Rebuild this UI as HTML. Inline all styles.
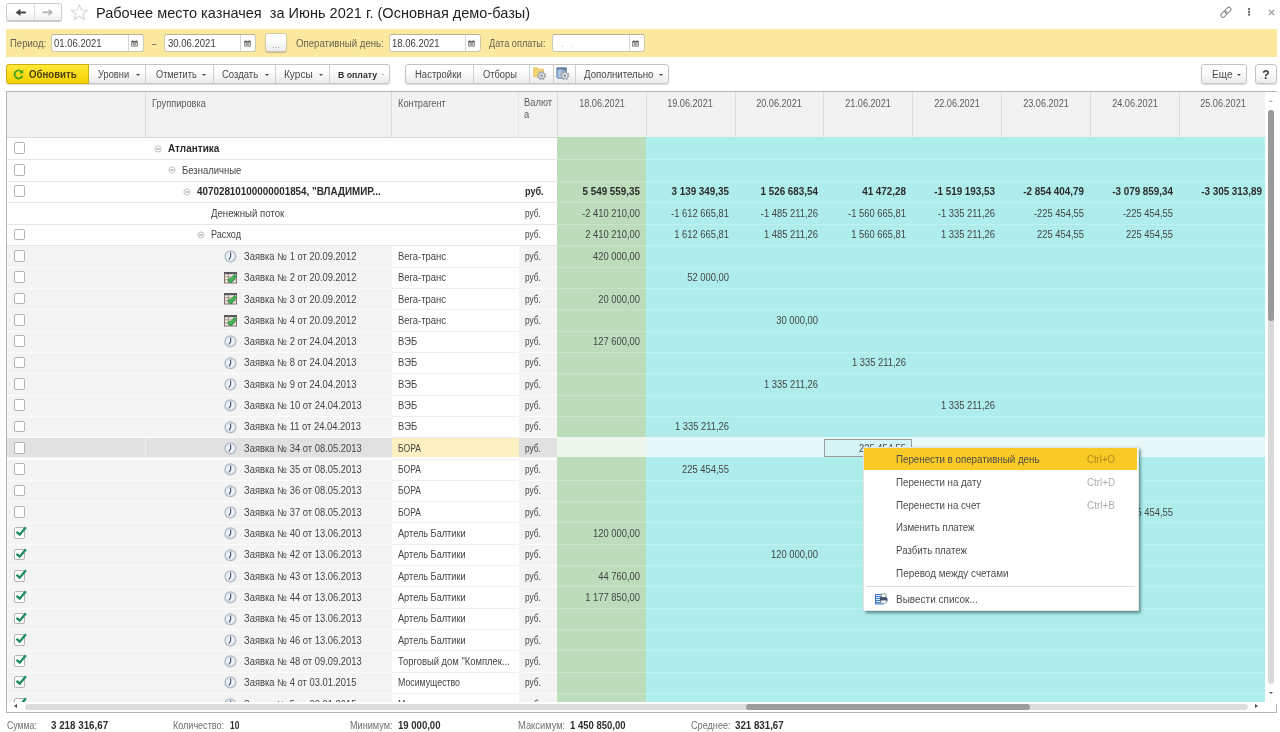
<!DOCTYPE html>
<html lang="ru"><head><meta charset="utf-8"><title>Рабочее место казначея</title>
<style>
*{box-sizing:border-box;margin:0;padding:0}
html,body{width:1280px;height:732px;overflow:hidden;background:#fff}
body{filter:blur(.3px);position:relative;font-family:"Liberation Sans",sans-serif;font-size:9.5px;color:#3f3f3f}
.a{position:absolute;white-space:nowrap}
</style></head>
<body>
<div class="a" style="left:6.4px;top:3.3px;width:56px;height:17.8px;border:1px solid #cacaca;border-radius:2.5px;background:linear-gradient(#fff 40%,#f0f0f0);box-shadow:0 1px 0.5px #c9c9c9"></div>
<div class="a" style="left:34px;top:4.3px;width:1px;height:16px;background:#dcdcdc"></div>
<svg class="a" style="left:15px;top:8px" width="12" height="9" viewBox="0 0 12 9"><path d="M0.6 4.4 L5.4 0.7 V3.4 H10.8 V5.4 H5.4 V8.1 Z" fill="#474747"/></svg>
<svg class="a" style="left:42px;top:8px" width="12" height="9" viewBox="0 0 12 9"><path d="M11.2 4.4 L6.6 0.7 V3.5 H0.4 V5.3 H6.6 V8.1 Z" fill="#b5b5b5"/></svg>
<svg class="a" style="left:70px;top:3.2px" width="19" height="18" viewBox="0 0 19 18"><path d="M9.3 1.6 L11.5 7 L17.4 7.3 L12.8 10.9 L14.4 16.5 L9.3 13.3 L4.2 16.5 L5.8 10.9 L1.2 7.3 L7.1 7 Z" fill="#fff" stroke="#d6d6d6" stroke-width="1.1" stroke-linejoin="round"/></svg>
<div class="a" style="left:96.3px;top:2.9px;font-size:15px;line-height:20px;color:#1f1f1f;white-space:pre;transform:scaleX(.969);transform-origin:0 50%">Рабочее место казначея  за Июнь 2021 г. (Основная демо-базы)</div>
<svg class="a" style="left:1219px;top:5px" width="14" height="14" viewBox="0 0 14 14"><g fill="none" stroke="#8d8d8d" stroke-width="1.1"><rect x="-3.4" y="-2.1" width="6.8" height="4.2" rx="2.1" transform="translate(4.9 9.3) rotate(-45)"/><rect x="-3.4" y="-2.1" width="6.8" height="4.2" rx="2.1" transform="translate(8.9 5.3) rotate(-45)"/></g></svg>
<div class="a" style="left:1247.5px;top:8.4px;width:2px;height:1.8px;background:#6a6a6a;box-shadow:0 2.8px 0 #6a6a6a,0 5.6px 0 #6a6a6a"></div>
<svg class="a" style="left:1268px;top:8.5px" width="7" height="7" viewBox="0 0 7 7"><path d="M0.8 0.8 L6.2 6.2 M6.2 0.8 L0.8 6.2" stroke="#8d8d8d" stroke-width="1.1"/></svg>
<div class="a" style="left:6px;top:29px;width:1271px;height:28px;background:#fbe9a0"></div>
<div class="a" style="left:9.8px;transform-origin:0 50%;top:36.70px;line-height:14px;font-size:10px;color:#686350;transform:scaleX(0.9561);">Период:</div>
<div class="a" style="left:51px;top:33.6px;width:92.5px;height:18.8px;background:#fff;border:1px solid #cfc9aa;border-top-color:#b9b396;border-radius:3px"></div>
<div class="a" style="left:127.5px;top:34.6px;width:1px;height:16.8px;background:#d4d4d4"></div>
<svg class="a" style="left:131.1px;top:39.6px" width="7" height="7" viewBox="0 0 7 7"><path d="M0.3 1 H1.2 V0.2 H2.4 V1 H4.6 V0.2 H5.8 V1 H6.7 V6.6 H0.3 Z" fill="#5e5e5e"/><rect x="1.1" y="2.6" width="4.8" height="3.2" fill="#ededed"/><rect x="1.9" y="3.3" width="3.2" height="1.9" fill="#8c8c8c"/></svg>
<div class="a" style="left:54.4px;transform-origin:0 50%;top:36.80px;line-height:14px;font-size:10px;color:#3c3c3c;transform:scaleX(0.9491);">01.06.2021</div>
<div class="a" style="left:152px;transform-origin:0 50%;top:36.70px;line-height:14px;font-size:10px;color:#686350;transform:scaleX(0.8271);">–</div>
<div class="a" style="left:164px;top:33.6px;width:92px;height:18.8px;background:#fff;border:1px solid #cfc9aa;border-top-color:#b9b396;border-radius:3px"></div>
<div class="a" style="left:240px;top:34.6px;width:1px;height:16.8px;background:#d4d4d4"></div>
<svg class="a" style="left:243.6px;top:39.6px" width="7" height="7" viewBox="0 0 7 7"><path d="M0.3 1 H1.2 V0.2 H2.4 V1 H4.6 V0.2 H5.8 V1 H6.7 V6.6 H0.3 Z" fill="#5e5e5e"/><rect x="1.1" y="2.6" width="4.8" height="3.2" fill="#ededed"/><rect x="1.9" y="3.3" width="3.2" height="1.9" fill="#8c8c8c"/></svg>
<div class="a" style="left:167.8px;transform-origin:0 50%;top:36.80px;line-height:14px;font-size:10px;color:#3c3c3c;transform:scaleX(0.9531);">30.06.2021</div>
<div class="a" style="left:265.3px;top:32.8px;width:22px;height:19px;border:1px solid #d0caa8;border-radius:3px;background:linear-gradient(#fff 35%,#ececec);box-shadow:0 1px 1px #c4b98a"></div>
<div class="a" style="left:126.19999999999999px;width:300px;text-align:center;transform-origin:50% 50%;top:37.50px;line-height:14px;font-size:9px;color:#9a9a9a;transform:scaleX(0.9380);">...</div>
<div class="a" style="left:295.5px;transform-origin:0 50%;top:36.70px;line-height:14px;font-size:10px;color:#686350;transform:scaleX(0.9635);">Оперативный день:</div>
<div class="a" style="left:388.5px;top:33.6px;width:92.0px;height:18.8px;background:#fff;border:1px solid #cfc9aa;border-top-color:#b9b396;border-radius:3px"></div>
<div class="a" style="left:464.5px;top:34.6px;width:1px;height:16.8px;background:#d4d4d4"></div>
<svg class="a" style="left:468.1px;top:39.6px" width="7" height="7" viewBox="0 0 7 7"><path d="M0.3 1 H1.2 V0.2 H2.4 V1 H4.6 V0.2 H5.8 V1 H6.7 V6.6 H0.3 Z" fill="#5e5e5e"/><rect x="1.1" y="2.6" width="4.8" height="3.2" fill="#ededed"/><rect x="1.9" y="3.3" width="3.2" height="1.9" fill="#8c8c8c"/></svg>
<div class="a" style="left:392.2px;transform-origin:0 50%;top:36.80px;line-height:14px;font-size:10px;color:#3c3c3c;transform:scaleX(0.9491);">18.06.2021</div>
<div class="a" style="left:488.7px;transform-origin:0 50%;top:36.70px;line-height:14px;font-size:10px;color:#686350;transform:scaleX(0.9168);">Дата оплаты:</div>
<div class="a" style="left:552px;top:33.6px;width:92.5px;height:18.8px;background:#fff;border:1px solid #cfc9aa;border-top-color:#b9b396;border-radius:3px"></div>
<div class="a" style="left:628.5px;top:34.6px;width:1px;height:16.8px;background:#d4d4d4"></div>
<svg class="a" style="left:632.1px;top:39.6px" width="7" height="7" viewBox="0 0 7 7"><path d="M0.3 1 H1.2 V0.2 H2.4 V1 H4.6 V0.2 H5.8 V1 H6.7 V6.6 H0.3 Z" fill="#5e5e5e"/><rect x="1.1" y="2.6" width="4.8" height="3.2" fill="#ededed"/><rect x="1.9" y="3.3" width="3.2" height="1.9" fill="#8c8c8c"/></svg>
<div class="a" style="left:561px;transform-origin:0 50%;top:36.80px;line-height:14px;font-size:10px;color:#c4c4c4;transform:scaleX(0.8638);">.&nbsp;&nbsp;&nbsp;.</div>
<div class="a" style="left:6px;top:64px;width:383.5px;height:19.5px;border:1px solid #c4c4c4;background:linear-gradient(#ffffff 30%,#ebebeb);box-shadow:0 1px 1px rgba(0,0,0,.13);border-radius:3px"></div>
<div class="a" style="left:6px;top:64px;width:83px;height:19.5px;border:1px solid #cdb010;border-radius:3px 0 0 3px;background:linear-gradient(#ffe838,#f5d000)"></div>
<svg class="a" style="left:12.5px;top:69px" width="11" height="11" viewBox="0 0 11 11"><path d="M8.6 2.9 A4 4 0 1 0 9.3 6.6" fill="none" stroke="#4aa51c" stroke-width="1.9"/><path d="M10.2 0.4 V4.4 H6.2 Z" fill="#4aa51c"/></svg>
<div class="a" style="left:28.9px;transform-origin:0 50%;top:67.80px;line-height:14px;font-size:10px;font-weight:bold;color:#4a4210;transform:scaleX(0.9627);">Обновить</div>
<div class="a" style="left:98.3px;transform-origin:0 50%;top:67.80px;line-height:14px;font-size:10px;color:#4a4a4a;transform:scaleX(0.9293);">Уровни</div>
<div class="a" style="left:136.0px;top:74.0px;width:0;height:0;border-left:2.2px solid transparent;border-right:2.2px solid transparent;border-top:2.2px solid #4a4a4a"></div>
<div class="a" style="left:145px;top:65px;width:1px;height:17.5px;background:#cfcfcf"></div>
<div class="a" style="left:155.5px;transform-origin:0 50%;top:67.80px;line-height:14px;font-size:10px;color:#4a4a4a;transform:scaleX(0.9162);">Отметить</div>
<div class="a" style="left:202.3px;top:74.0px;width:0;height:0;border-left:2.2px solid transparent;border-right:2.2px solid transparent;border-top:2.2px solid #4a4a4a"></div>
<div class="a" style="left:212.5px;top:65px;width:1px;height:17.5px;background:#cfcfcf"></div>
<div class="a" style="left:222.4px;transform-origin:0 50%;top:67.80px;line-height:14px;font-size:10px;color:#4a4a4a;transform:scaleX(0.9493);">Создать</div>
<div class="a" style="left:265.1px;top:74.0px;width:0;height:0;border-left:2.2px solid transparent;border-right:2.2px solid transparent;border-top:2.2px solid #4a4a4a"></div>
<div class="a" style="left:275px;top:65px;width:1px;height:17.5px;background:#cfcfcf"></div>
<div class="a" style="left:284.3px;transform-origin:0 50%;top:67.80px;line-height:14px;font-size:10px;color:#4a4a4a;transform:scaleX(1.0079);">Курсы</div>
<div class="a" style="left:319.2px;top:74.0px;width:0;height:0;border-left:2.2px solid transparent;border-right:2.2px solid transparent;border-top:2.2px solid #4a4a4a"></div>
<div class="a" style="left:329px;top:65px;width:1px;height:17.5px;background:#cfcfcf"></div>
<div class="a" style="left:337.5px;transform-origin:0 50%;top:67.80px;line-height:14px;font-size:9px;font-weight:bold;color:#333;transform:scaleX(0.9708);">В оплату</div>
<div class="a" style="left:381.59999999999997px;top:74.3px;width:0;height:0;border-left:1.6px solid transparent;border-right:1.6px solid transparent;border-top:1.6px solid #8a8a8a"></div>
<div class="a" style="left:405px;top:64px;width:264px;height:19.5px;border:1px solid #c4c4c4;background:linear-gradient(#ffffff 30%,#ebebeb);box-shadow:0 1px 1px rgba(0,0,0,.13);border-radius:3px"></div>
<div class="a" style="left:415.3px;transform-origin:0 50%;top:67.80px;line-height:14px;font-size:10px;color:#4a4a4a;transform:scaleX(0.9504);">Настройки</div>
<div class="a" style="left:472.5px;top:65px;width:1px;height:17.5px;background:#cfcfcf"></div>
<div class="a" style="left:483.1px;transform-origin:0 50%;top:67.80px;line-height:14px;font-size:10px;color:#4a4a4a;transform:scaleX(0.9314);">Отборы</div>
<div class="a" style="left:529px;top:65px;width:1px;height:17.5px;background:#cfcfcf"></div>
<div class="a" style="left:552.5px;top:65px;width:1px;height:17.5px;background:#cfcfcf"></div>
<div class="a" style="left:574.5px;top:65px;width:1px;height:17.5px;background:#cfcfcf"></div>
<div class="a" style="left:583.8px;transform-origin:0 50%;top:67.80px;line-height:14px;font-size:10px;color:#4a4a4a;transform:scaleX(0.9652);">Дополнительно</div>
<div class="a" style="left:659.1999999999999px;top:74.0px;width:0;height:0;border-left:2.2px solid transparent;border-right:2.2px solid transparent;border-top:2.2px solid #4a4a4a"></div>
<svg class="a" style="left:533px;top:66.5px" width="14" height="14" viewBox="0 0 14 14"><path d="M0.6 1.6 Q0.6 0.8 1.4 0.8 H4.2 L5.4 2.2 H10.6 V9.6 H0.6 Z" fill="#f2d675" stroke="#e3bd4e" stroke-width="0.8"/><circle cx="8.6" cy="8.6" r="3.9" fill="none" stroke="#a3abb3" stroke-width="1.5" stroke-dasharray="1.7 1.36"/><circle cx="8.6" cy="8.6" r="3" fill="#f6f7f8" stroke="#a3abb3" stroke-width="1.2"/><circle cx="8.6" cy="8.6" r="1.2" fill="#6c7488"/></svg>
<svg class="a" style="left:555.5px;top:66.5px" width="14" height="14" viewBox="0 0 14 14"><defs><linearGradient id="fl" x1="0" y1="0" x2="1" y2="0"><stop offset="0" stop-color="#7fa0cb"/><stop offset=".3" stop-color="#b5cbe6"/><stop offset="1" stop-color="#6f8db5"/></linearGradient></defs><path d="M0.8 0.8 H10.4 V11.4 H2 L0.8 10.2 Z" fill="url(#fl)" stroke="#6685b0" stroke-width="0.8"/><rect x="0.8" y="0.8" width="9.6" height="1.6" fill="#5f789f"/><circle cx="8.8" cy="8.6" r="3.9" fill="none" stroke="#a3abb3" stroke-width="1.5" stroke-dasharray="1.7 1.36"/><circle cx="8.8" cy="8.6" r="3" fill="#f6f7f8" stroke="#a3abb3" stroke-width="1.2"/><circle cx="8.8" cy="8.6" r="1.2" fill="#6c7488"/></svg>
<div class="a" style="left:1201px;top:64px;width:46px;height:19.5px;border:1px solid #c4c4c4;background:linear-gradient(#ffffff 30%,#ebebeb);box-shadow:0 1px 1px rgba(0,0,0,.13);border-radius:3px"></div>
<div class="a" style="left:1211.7px;transform-origin:0 50%;top:67.80px;line-height:14px;font-size:10px;color:#4a4a4a;transform:scaleX(1.0069);">Еще</div>
<div class="a" style="left:1237.3999999999999px;top:74.0px;width:0;height:0;border-left:2.2px solid transparent;border-right:2.2px solid transparent;border-top:2.2px solid #4a4a4a"></div>
<div class="a" style="left:1254.5px;top:64px;width:22.0px;height:19.5px;border:1px solid #c4c4c4;background:linear-gradient(#ffffff 30%,#ebebeb);box-shadow:0 1px 1px rgba(0,0,0,.13);border-radius:3px"></div>
<div class="a" style="left:1115.8px;width:300px;text-align:center;transform-origin:50% 50%;top:67.80px;line-height:14px;font-size:12px;font-weight:bold;color:#333;transform:scaleX(1.0000);">?</div>
<div class="a" style="left:6px;top:90.5px;width:1271px;height:622.5px;border:1px solid #b4b4b4;background:#fff"></div>
<div class="a" style="left:7px;top:91.5px;width:1258.5px;height:45.5px;background:#f2f2f2"></div>
<div class="a" style="left:7px;top:136.5px;width:1258.5px;height:1px;background:#d9d9d9"></div>
<div class="a" style="left:145px;top:92px;width:1px;height:45px;background:#dadada"></div>
<div class="a" style="left:391px;top:92px;width:1px;height:45px;background:#dadada"></div>
<div class="a" style="left:518px;top:92px;width:1px;height:45px;background:#e6e6e6"></div>
<div class="a" style="left:556.9px;top:92px;width:1px;height:45px;background:#dcdcdc"></div>
<div class="a" style="left:645.75px;top:92px;width:1px;height:45px;background:#dcdcdc"></div>
<div class="a" style="left:734.6px;top:92px;width:1px;height:45px;background:#dcdcdc"></div>
<div class="a" style="left:823.45px;top:92px;width:1px;height:45px;background:#dcdcdc"></div>
<div class="a" style="left:912.3000000000001px;top:92px;width:1px;height:45px;background:#dcdcdc"></div>
<div class="a" style="left:1001.15px;top:92px;width:1px;height:45px;background:#dcdcdc"></div>
<div class="a" style="left:1090.0px;top:92px;width:1px;height:45px;background:#dcdcdc"></div>
<div class="a" style="left:1178.85px;top:92px;width:1px;height:45px;background:#dcdcdc"></div>
<div class="a" style="left:152.3px;transform-origin:0 50%;top:96.50px;line-height:14px;font-size:10px;color:#5c5c5c;transform:scaleX(0.9240);">Группировка</div>
<div class="a" style="left:397.5px;transform-origin:0 50%;top:96.50px;line-height:14px;font-size:10px;color:#5c5c5c;transform:scaleX(0.9244);">Контрагент</div>
<div class="a" style="left:524.4px;top:97.2px;line-height:11.8px;font-size:10px;color:#5c5c5c;transform:scaleX(.936);transform-origin:0 50%">Валют<br>а</div>
<div class="a" style="left:451.5px;width:300px;text-align:center;transform-origin:50% 50%;top:96.50px;line-height:14px;font-size:10px;color:#5c5c5c;transform:scaleX(0.9130);">18.06.2021</div>
<div class="a" style="left:540.35px;width:300px;text-align:center;transform-origin:50% 50%;top:96.50px;line-height:14px;font-size:10px;color:#5c5c5c;transform:scaleX(0.9130);">19.06.2021</div>
<div class="a" style="left:629.2px;width:300px;text-align:center;transform-origin:50% 50%;top:96.50px;line-height:14px;font-size:10px;color:#5c5c5c;transform:scaleX(0.9130);">20.06.2021</div>
<div class="a" style="left:718.0500000000001px;width:300px;text-align:center;transform-origin:50% 50%;top:96.50px;line-height:14px;font-size:10px;color:#5c5c5c;transform:scaleX(0.9130);">21.06.2021</div>
<div class="a" style="left:806.9000000000001px;width:300px;text-align:center;transform-origin:50% 50%;top:96.50px;line-height:14px;font-size:10px;color:#5c5c5c;transform:scaleX(0.9130);">22.06.2021</div>
<div class="a" style="left:895.75px;width:300px;text-align:center;transform-origin:50% 50%;top:96.50px;line-height:14px;font-size:10px;color:#5c5c5c;transform:scaleX(0.9130);">23.06.2021</div>
<div class="a" style="left:984.6000000000001px;width:300px;text-align:center;transform-origin:50% 50%;top:96.50px;line-height:14px;font-size:10px;color:#5c5c5c;transform:scaleX(0.9130);">24.06.2021</div>
<div class="a" style="left:1073.45px;width:300px;text-align:center;transform-origin:50% 50%;top:96.50px;line-height:14px;font-size:10px;color:#5c5c5c;transform:scaleX(0.9130);">25.06.2021</div>
<div class="a" style="left:557.3px;top:137px;width:88.85000000000002px;height:564.5px;background:#bcdcbc"></div>
<div class="a" style="left:646.15px;top:137px;width:619.35px;height:564.5px;background:#afeded"></div>
<div class="a" style="left:0;top:0;width:1280px;height:701.5px;overflow:hidden">
<div class="a" style="left:13.7px;top:142.29px;width:11.3px;height:11.8px;border:1px solid #b3b3b3;border-radius:2px;background:#fff"></div>
<svg class="a" style="left:154px;top:144.69px" width="8" height="8" viewBox="0 0 8 8"><circle cx="4" cy="4" r="3.1" fill="#fdfdfd" stroke="#c3c3c3" stroke-width="1"/><path d="M2.2 4 H5.8" stroke="#8e8e8e" stroke-width="1"/></svg>
<div class="a" style="left:168px;transform-origin:0 50%;top:142.09px;line-height:14px;font-size:10px;font-weight:bold;color:#2b2b2b;transform:scaleX(0.9984);">Атлантика</div>
<div class="a" style="left:7px;top:158.98px;width:550.30px;height:1px;background:#e6e6e6"></div>
<div class="a" style="left:557.3px;top:158.98px;width:88.85px;height:1px;background:#c8e3c8"></div>
<div class="a" style="left:646.15px;top:158.98px;width:619.35px;height:1px;background:#bff1f1"></div>
<div class="a" style="left:13.7px;top:163.87px;width:11.3px;height:11.8px;border:1px solid #b3b3b3;border-radius:2px;background:#fff"></div>
<svg class="a" style="left:168px;top:166.27px" width="8" height="8" viewBox="0 0 8 8"><circle cx="4" cy="4" r="3.1" fill="#fdfdfd" stroke="#c3c3c3" stroke-width="1"/><path d="M2.2 4 H5.8" stroke="#8e8e8e" stroke-width="1"/></svg>
<div class="a" style="left:182px;transform-origin:0 50%;top:163.67px;line-height:14px;font-size:10px;color:#454545;transform:scaleX(0.9506);">Безналичные</div>
<div class="a" style="left:7px;top:180.56px;width:550.30px;height:1px;background:#e6e6e6"></div>
<div class="a" style="left:557.3px;top:180.56px;width:88.85px;height:1px;background:#c8e3c8"></div>
<div class="a" style="left:646.15px;top:180.56px;width:619.35px;height:1px;background:#bff1f1"></div>
<div class="a" style="left:13.7px;top:185.45px;width:11.3px;height:11.8px;border:1px solid #b3b3b3;border-radius:2px;background:#fff"></div>
<svg class="a" style="left:183px;top:187.85px" width="8" height="8" viewBox="0 0 8 8"><circle cx="4" cy="4" r="3.1" fill="#fdfdfd" stroke="#c3c3c3" stroke-width="1"/><path d="M2.2 4 H5.8" stroke="#8e8e8e" stroke-width="1"/></svg>
<div class="a" style="left:197px;transform-origin:0 50%;top:185.25px;line-height:14px;font-size:10px;font-weight:bold;color:#2b2b2b;transform:scaleX(0.9850);">40702810100000001854, "ВЛАДИМИР...</div>
<div class="a" style="left:525px;transform-origin:0 50%;top:185.25px;line-height:14px;font-size:10px;font-weight:bold;color:#2b2b2b;transform:scaleX(0.9067);">руб.</div>
<div class="a" style="left:339.79999999999995px;width:300px;text-align:right;transform-origin:100% 50%;top:185.25px;line-height:14px;font-size:10px;font-weight:bold;color:#2b2b2b;transform:scaleX(0.9850);">5 549 559,35</div>
<div class="a" style="left:428.65px;width:300px;text-align:right;transform-origin:100% 50%;top:185.25px;line-height:14px;font-size:10px;font-weight:bold;color:#2b2b2b;transform:scaleX(0.9850);">3 139 349,35</div>
<div class="a" style="left:517.5px;width:300px;text-align:right;transform-origin:100% 50%;top:185.25px;line-height:14px;font-size:10px;font-weight:bold;color:#2b2b2b;transform:scaleX(0.9850);">1 526 683,54</div>
<div class="a" style="left:606.35px;width:300px;text-align:right;transform-origin:100% 50%;top:185.25px;line-height:14px;font-size:10px;font-weight:bold;color:#2b2b2b;transform:scaleX(0.9850);">41 472,28</div>
<div class="a" style="left:695.2px;width:300px;text-align:right;transform-origin:100% 50%;top:185.25px;line-height:14px;font-size:10px;font-weight:bold;color:#2b2b2b;transform:scaleX(0.9850);">-1 519 193,53</div>
<div class="a" style="left:784.05px;width:300px;text-align:right;transform-origin:100% 50%;top:185.25px;line-height:14px;font-size:10px;font-weight:bold;color:#2b2b2b;transform:scaleX(0.9850);">-2 854 404,79</div>
<div class="a" style="left:872.9000000000001px;width:300px;text-align:right;transform-origin:100% 50%;top:185.25px;line-height:14px;font-size:10px;font-weight:bold;color:#2b2b2b;transform:scaleX(0.9850);">-3 079 859,34</div>
<div class="a" style="left:961.75px;width:300px;text-align:right;transform-origin:100% 50%;top:185.25px;line-height:14px;font-size:10px;font-weight:bold;color:#2b2b2b;transform:scaleX(0.9850);">-3 305 313,89</div>
<div class="a" style="left:7px;top:202.14px;width:550.30px;height:1px;background:#e6e6e6"></div>
<div class="a" style="left:557.3px;top:202.14px;width:88.85px;height:1px;background:#c8e3c8"></div>
<div class="a" style="left:646.15px;top:202.14px;width:619.35px;height:1px;background:#bff1f1"></div>
<div class="a" style="left:211px;transform-origin:0 50%;top:206.83px;line-height:14px;font-size:10px;color:#454545;transform:scaleX(0.9599);">Денежный поток</div>
<div class="a" style="left:525px;transform-origin:0 50%;top:206.83px;line-height:14px;font-size:10px;color:#454545;transform:scaleX(0.8286);">руб.</div>
<div class="a" style="left:339.79999999999995px;width:300px;text-align:right;transform-origin:100% 50%;top:206.83px;line-height:14px;font-size:10px;color:#454545;transform:scaleX(0.9380);">-2 410 210,00</div>
<div class="a" style="left:428.65px;width:300px;text-align:right;transform-origin:100% 50%;top:206.83px;line-height:14px;font-size:10px;color:#454545;transform:scaleX(0.9380);">-1 612 665,81</div>
<div class="a" style="left:517.5px;width:300px;text-align:right;transform-origin:100% 50%;top:206.83px;line-height:14px;font-size:10px;color:#454545;transform:scaleX(0.9380);">-1 485 211,26</div>
<div class="a" style="left:606.35px;width:300px;text-align:right;transform-origin:100% 50%;top:206.83px;line-height:14px;font-size:10px;color:#454545;transform:scaleX(0.9380);">-1 560 665,81</div>
<div class="a" style="left:695.2px;width:300px;text-align:right;transform-origin:100% 50%;top:206.83px;line-height:14px;font-size:10px;color:#454545;transform:scaleX(0.9380);">-1 335 211,26</div>
<div class="a" style="left:784.05px;width:300px;text-align:right;transform-origin:100% 50%;top:206.83px;line-height:14px;font-size:10px;color:#454545;transform:scaleX(0.9380);">-225 454,55</div>
<div class="a" style="left:872.9000000000001px;width:300px;text-align:right;transform-origin:100% 50%;top:206.83px;line-height:14px;font-size:10px;color:#454545;transform:scaleX(0.9380);">-225 454,55</div>
<div class="a" style="left:7px;top:223.72px;width:550.30px;height:1px;background:#e6e6e6"></div>
<div class="a" style="left:557.3px;top:223.72px;width:88.85px;height:1px;background:#c8e3c8"></div>
<div class="a" style="left:646.15px;top:223.72px;width:619.35px;height:1px;background:#bff1f1"></div>
<div class="a" style="left:13.7px;top:228.61px;width:11.3px;height:11.8px;border:1px solid #b3b3b3;border-radius:2px;background:#fff"></div>
<svg class="a" style="left:197px;top:231.01px" width="8" height="8" viewBox="0 0 8 8"><circle cx="4" cy="4" r="3.1" fill="#fdfdfd" stroke="#c3c3c3" stroke-width="1"/><path d="M2.2 4 H5.8" stroke="#8e8e8e" stroke-width="1"/></svg>
<div class="a" style="left:211px;transform-origin:0 50%;top:228.41px;line-height:14px;font-size:10px;color:#454545;transform:scaleX(0.9100);">Расход</div>
<div class="a" style="left:525px;transform-origin:0 50%;top:228.41px;line-height:14px;font-size:10px;color:#454545;transform:scaleX(0.8286);">руб.</div>
<div class="a" style="left:339.79999999999995px;width:300px;text-align:right;transform-origin:100% 50%;top:228.41px;line-height:14px;font-size:10px;color:#454545;transform:scaleX(0.9380);">2 410 210,00</div>
<div class="a" style="left:428.65px;width:300px;text-align:right;transform-origin:100% 50%;top:228.41px;line-height:14px;font-size:10px;color:#454545;transform:scaleX(0.9380);">1 612 665,81</div>
<div class="a" style="left:517.5px;width:300px;text-align:right;transform-origin:100% 50%;top:228.41px;line-height:14px;font-size:10px;color:#454545;transform:scaleX(0.9380);">1 485 211,26</div>
<div class="a" style="left:606.35px;width:300px;text-align:right;transform-origin:100% 50%;top:228.41px;line-height:14px;font-size:10px;color:#454545;transform:scaleX(0.9380);">1 560 665,81</div>
<div class="a" style="left:695.2px;width:300px;text-align:right;transform-origin:100% 50%;top:228.41px;line-height:14px;font-size:10px;color:#454545;transform:scaleX(0.9380);">1 335 211,26</div>
<div class="a" style="left:784.05px;width:300px;text-align:right;transform-origin:100% 50%;top:228.41px;line-height:14px;font-size:10px;color:#454545;transform:scaleX(0.9380);">225 454,55</div>
<div class="a" style="left:872.9000000000001px;width:300px;text-align:right;transform-origin:100% 50%;top:228.41px;line-height:14px;font-size:10px;color:#454545;transform:scaleX(0.9380);">225 454,55</div>
<div class="a" style="left:7px;top:245.30px;width:384.5px;height:21.32px;background:#f4f4f4"></div>
<div class="a" style="left:518.5px;top:245.30px;width:38.80px;height:21.32px;background:#f4f4f4"></div>
<div class="a" style="left:7px;top:245.30px;width:550.30px;height:1px;background:#e6e6e6"></div>
<div class="a" style="left:557.3px;top:245.30px;width:88.85px;height:1px;background:#c8e3c8"></div>
<div class="a" style="left:646.15px;top:245.30px;width:619.35px;height:1px;background:#bff1f1"></div>
<div class="a" style="left:13.7px;top:250.06px;width:11.3px;height:11.8px;border:1px solid #b3b3b3;border-radius:2px;background:#fff"></div>
<svg class="a" style="left:224px;top:250.06px" width="13" height="13" viewBox="0 0 13 13"><circle cx="6.4" cy="6.3" r="5.4" fill="#f1f4f8" stroke="#b5becb" stroke-width="1.5"/><circle cx="6.4" cy="6.3" r="4" fill="none" stroke="#dde4ee" stroke-width="0.9"/><path d="M6.6 2.4 V6.8 L4.9 9.4" fill="none" stroke="#4d5a76" stroke-width="1.25"/></svg>
<div class="a" style="left:244px;transform-origin:0 50%;top:249.86px;line-height:14px;font-size:10px;color:#454545;transform:scaleX(0.9380);">Заявка № 1 от 20.09.2012</div>
<div class="a" style="left:398.3px;transform-origin:0 50%;top:249.86px;line-height:14px;font-size:10px;color:#454545;transform:scaleX(0.9452);">Вега-транс</div>
<div class="a" style="left:525px;transform-origin:0 50%;top:249.86px;line-height:14px;font-size:10px;color:#454545;transform:scaleX(0.8286);">руб.</div>
<div class="a" style="left:339.79999999999995px;width:300px;text-align:right;transform-origin:100% 50%;top:249.86px;line-height:14px;font-size:10px;color:#454545;transform:scaleX(0.9380);">420 000,00</div>
<div class="a" style="left:7px;top:266.62px;width:384.5px;height:21.32px;background:#f4f4f4"></div>
<div class="a" style="left:518.5px;top:266.62px;width:38.80px;height:21.32px;background:#f4f4f4"></div>
<div class="a" style="left:7px;top:266.62px;width:550.30px;height:1px;background:#fcfcfc"></div>
<div class="a" style="left:391.5px;top:266.62px;width:127px;height:1px;background:#eeeeee"></div>
<div class="a" style="left:557.3px;top:266.62px;width:88.85px;height:1px;background:#c8e3c8"></div>
<div class="a" style="left:646.15px;top:266.62px;width:619.35px;height:1px;background:#bff1f1"></div>
<div class="a" style="left:13.7px;top:271.38px;width:11.3px;height:11.8px;border:1px solid #b3b3b3;border-radius:2px;background:#fff"></div>
<svg class="a" style="left:224px;top:272.08px" width="13" height="12" viewBox="0 0 13 12"><rect x="0.5" y="0.5" width="12" height="10.5" fill="#f1ece2" stroke="#7d6f6a" stroke-width="1"/><rect x="0" y="0" width="13" height="2.2" fill="#5a5a5a"/><path d="M0.5 4.8 H12.5 M0.5 7.8 H12.5 M4.3 2 V11" stroke="#8f807a" stroke-width="0.8" fill="none"/><path d="M4.6 6.6 L7 9.2 L11.6 3.2" fill="none" stroke="#2c8a47" stroke-width="3.6" stroke-linejoin="round"/><path d="M4.8 6.6 L7 8.8 L11.2 3.6" fill="none" stroke="#48b857" stroke-width="2.2" stroke-linejoin="round"/></svg>
<div class="a" style="left:244px;transform-origin:0 50%;top:271.18px;line-height:14px;font-size:10px;color:#454545;transform:scaleX(0.9380);">Заявка № 2 от 20.09.2012</div>
<div class="a" style="left:398.3px;transform-origin:0 50%;top:271.18px;line-height:14px;font-size:10px;color:#454545;transform:scaleX(0.9452);">Вега-транс</div>
<div class="a" style="left:525px;transform-origin:0 50%;top:271.18px;line-height:14px;font-size:10px;color:#454545;transform:scaleX(0.8286);">руб.</div>
<div class="a" style="left:428.65px;width:300px;text-align:right;transform-origin:100% 50%;top:271.18px;line-height:14px;font-size:10px;color:#454545;transform:scaleX(0.9380);">52 000,00</div>
<div class="a" style="left:7px;top:287.94px;width:384.5px;height:21.32px;background:#f4f4f4"></div>
<div class="a" style="left:518.5px;top:287.94px;width:38.80px;height:21.32px;background:#f4f4f4"></div>
<div class="a" style="left:7px;top:287.94px;width:550.30px;height:1px;background:#fcfcfc"></div>
<div class="a" style="left:391.5px;top:287.94px;width:127px;height:1px;background:#eeeeee"></div>
<div class="a" style="left:557.3px;top:287.94px;width:88.85px;height:1px;background:#c8e3c8"></div>
<div class="a" style="left:646.15px;top:287.94px;width:619.35px;height:1px;background:#bff1f1"></div>
<div class="a" style="left:13.7px;top:292.70px;width:11.3px;height:11.8px;border:1px solid #b3b3b3;border-radius:2px;background:#fff"></div>
<svg class="a" style="left:224px;top:293.40px" width="13" height="12" viewBox="0 0 13 12"><rect x="0.5" y="0.5" width="12" height="10.5" fill="#f1ece2" stroke="#7d6f6a" stroke-width="1"/><rect x="0" y="0" width="13" height="2.2" fill="#5a5a5a"/><path d="M0.5 4.8 H12.5 M0.5 7.8 H12.5 M4.3 2 V11" stroke="#8f807a" stroke-width="0.8" fill="none"/><path d="M4.6 6.6 L7 9.2 L11.6 3.2" fill="none" stroke="#2c8a47" stroke-width="3.6" stroke-linejoin="round"/><path d="M4.8 6.6 L7 8.8 L11.2 3.6" fill="none" stroke="#48b857" stroke-width="2.2" stroke-linejoin="round"/></svg>
<div class="a" style="left:244px;transform-origin:0 50%;top:292.50px;line-height:14px;font-size:10px;color:#454545;transform:scaleX(0.9380);">Заявка № 3 от 20.09.2012</div>
<div class="a" style="left:398.3px;transform-origin:0 50%;top:292.50px;line-height:14px;font-size:10px;color:#454545;transform:scaleX(0.9452);">Вега-транс</div>
<div class="a" style="left:525px;transform-origin:0 50%;top:292.50px;line-height:14px;font-size:10px;color:#454545;transform:scaleX(0.8286);">руб.</div>
<div class="a" style="left:339.79999999999995px;width:300px;text-align:right;transform-origin:100% 50%;top:292.50px;line-height:14px;font-size:10px;color:#454545;transform:scaleX(0.9380);">20 000,00</div>
<div class="a" style="left:7px;top:309.26px;width:384.5px;height:21.32px;background:#f4f4f4"></div>
<div class="a" style="left:518.5px;top:309.26px;width:38.80px;height:21.32px;background:#f4f4f4"></div>
<div class="a" style="left:7px;top:309.26px;width:550.30px;height:1px;background:#fcfcfc"></div>
<div class="a" style="left:391.5px;top:309.26px;width:127px;height:1px;background:#eeeeee"></div>
<div class="a" style="left:557.3px;top:309.26px;width:88.85px;height:1px;background:#c8e3c8"></div>
<div class="a" style="left:646.15px;top:309.26px;width:619.35px;height:1px;background:#bff1f1"></div>
<div class="a" style="left:13.7px;top:314.02px;width:11.3px;height:11.8px;border:1px solid #b3b3b3;border-radius:2px;background:#fff"></div>
<svg class="a" style="left:224px;top:314.72px" width="13" height="12" viewBox="0 0 13 12"><rect x="0.5" y="0.5" width="12" height="10.5" fill="#f1ece2" stroke="#7d6f6a" stroke-width="1"/><rect x="0" y="0" width="13" height="2.2" fill="#5a5a5a"/><path d="M0.5 4.8 H12.5 M0.5 7.8 H12.5 M4.3 2 V11" stroke="#8f807a" stroke-width="0.8" fill="none"/><path d="M4.6 6.6 L7 9.2 L11.6 3.2" fill="none" stroke="#2c8a47" stroke-width="3.6" stroke-linejoin="round"/><path d="M4.8 6.6 L7 8.8 L11.2 3.6" fill="none" stroke="#48b857" stroke-width="2.2" stroke-linejoin="round"/></svg>
<div class="a" style="left:244px;transform-origin:0 50%;top:313.82px;line-height:14px;font-size:10px;color:#454545;transform:scaleX(0.9380);">Заявка № 4 от 20.09.2012</div>
<div class="a" style="left:398.3px;transform-origin:0 50%;top:313.82px;line-height:14px;font-size:10px;color:#454545;transform:scaleX(0.9452);">Вега-транс</div>
<div class="a" style="left:525px;transform-origin:0 50%;top:313.82px;line-height:14px;font-size:10px;color:#454545;transform:scaleX(0.8286);">руб.</div>
<div class="a" style="left:517.5px;width:300px;text-align:right;transform-origin:100% 50%;top:313.82px;line-height:14px;font-size:10px;color:#454545;transform:scaleX(0.9380);">30 000,00</div>
<div class="a" style="left:7px;top:330.58px;width:384.5px;height:21.32px;background:#f4f4f4"></div>
<div class="a" style="left:518.5px;top:330.58px;width:38.80px;height:21.32px;background:#f4f4f4"></div>
<div class="a" style="left:7px;top:330.58px;width:550.30px;height:1px;background:#fcfcfc"></div>
<div class="a" style="left:391.5px;top:330.58px;width:127px;height:1px;background:#eeeeee"></div>
<div class="a" style="left:557.3px;top:330.58px;width:88.85px;height:1px;background:#c8e3c8"></div>
<div class="a" style="left:646.15px;top:330.58px;width:619.35px;height:1px;background:#bff1f1"></div>
<div class="a" style="left:13.7px;top:335.34px;width:11.3px;height:11.8px;border:1px solid #b3b3b3;border-radius:2px;background:#fff"></div>
<svg class="a" style="left:224px;top:335.34px" width="13" height="13" viewBox="0 0 13 13"><circle cx="6.4" cy="6.3" r="5.4" fill="#f1f4f8" stroke="#b5becb" stroke-width="1.5"/><circle cx="6.4" cy="6.3" r="4" fill="none" stroke="#dde4ee" stroke-width="0.9"/><path d="M6.6 2.4 V6.8 L4.9 9.4" fill="none" stroke="#4d5a76" stroke-width="1.25"/></svg>
<div class="a" style="left:244px;transform-origin:0 50%;top:335.14px;line-height:14px;font-size:10px;color:#454545;transform:scaleX(0.9380);">Заявка № 2 от 24.04.2013</div>
<div class="a" style="left:398.3px;transform-origin:0 50%;top:335.14px;line-height:14px;font-size:10px;color:#454545;transform:scaleX(0.9403);">ВЭБ</div>
<div class="a" style="left:525px;transform-origin:0 50%;top:335.14px;line-height:14px;font-size:10px;color:#454545;transform:scaleX(0.8286);">руб.</div>
<div class="a" style="left:339.79999999999995px;width:300px;text-align:right;transform-origin:100% 50%;top:335.14px;line-height:14px;font-size:10px;color:#454545;transform:scaleX(0.9380);">127 600,00</div>
<div class="a" style="left:7px;top:351.90px;width:384.5px;height:21.32px;background:#f4f4f4"></div>
<div class="a" style="left:518.5px;top:351.90px;width:38.80px;height:21.32px;background:#f4f4f4"></div>
<div class="a" style="left:7px;top:351.90px;width:550.30px;height:1px;background:#fcfcfc"></div>
<div class="a" style="left:391.5px;top:351.90px;width:127px;height:1px;background:#eeeeee"></div>
<div class="a" style="left:557.3px;top:351.90px;width:88.85px;height:1px;background:#c8e3c8"></div>
<div class="a" style="left:646.15px;top:351.90px;width:619.35px;height:1px;background:#bff1f1"></div>
<div class="a" style="left:13.7px;top:356.66px;width:11.3px;height:11.8px;border:1px solid #b3b3b3;border-radius:2px;background:#fff"></div>
<svg class="a" style="left:224px;top:356.66px" width="13" height="13" viewBox="0 0 13 13"><circle cx="6.4" cy="6.3" r="5.4" fill="#f1f4f8" stroke="#b5becb" stroke-width="1.5"/><circle cx="6.4" cy="6.3" r="4" fill="none" stroke="#dde4ee" stroke-width="0.9"/><path d="M6.6 2.4 V6.8 L4.9 9.4" fill="none" stroke="#4d5a76" stroke-width="1.25"/></svg>
<div class="a" style="left:244px;transform-origin:0 50%;top:356.46px;line-height:14px;font-size:10px;color:#454545;transform:scaleX(0.9380);">Заявка № 8 от 24.04.2013</div>
<div class="a" style="left:398.3px;transform-origin:0 50%;top:356.46px;line-height:14px;font-size:10px;color:#454545;transform:scaleX(0.9403);">ВЭБ</div>
<div class="a" style="left:525px;transform-origin:0 50%;top:356.46px;line-height:14px;font-size:10px;color:#454545;transform:scaleX(0.8286);">руб.</div>
<div class="a" style="left:606.35px;width:300px;text-align:right;transform-origin:100% 50%;top:356.46px;line-height:14px;font-size:10px;color:#454545;transform:scaleX(0.9380);">1 335 211,26</div>
<div class="a" style="left:7px;top:373.22px;width:384.5px;height:21.32px;background:#f4f4f4"></div>
<div class="a" style="left:518.5px;top:373.22px;width:38.80px;height:21.32px;background:#f4f4f4"></div>
<div class="a" style="left:7px;top:373.22px;width:550.30px;height:1px;background:#fcfcfc"></div>
<div class="a" style="left:391.5px;top:373.22px;width:127px;height:1px;background:#eeeeee"></div>
<div class="a" style="left:557.3px;top:373.22px;width:88.85px;height:1px;background:#c8e3c8"></div>
<div class="a" style="left:646.15px;top:373.22px;width:619.35px;height:1px;background:#bff1f1"></div>
<div class="a" style="left:13.7px;top:377.98px;width:11.3px;height:11.8px;border:1px solid #b3b3b3;border-radius:2px;background:#fff"></div>
<svg class="a" style="left:224px;top:377.98px" width="13" height="13" viewBox="0 0 13 13"><circle cx="6.4" cy="6.3" r="5.4" fill="#f1f4f8" stroke="#b5becb" stroke-width="1.5"/><circle cx="6.4" cy="6.3" r="4" fill="none" stroke="#dde4ee" stroke-width="0.9"/><path d="M6.6 2.4 V6.8 L4.9 9.4" fill="none" stroke="#4d5a76" stroke-width="1.25"/></svg>
<div class="a" style="left:244px;transform-origin:0 50%;top:377.78px;line-height:14px;font-size:10px;color:#454545;transform:scaleX(0.9380);">Заявка № 9 от 24.04.2013</div>
<div class="a" style="left:398.3px;transform-origin:0 50%;top:377.78px;line-height:14px;font-size:10px;color:#454545;transform:scaleX(0.9403);">ВЭБ</div>
<div class="a" style="left:525px;transform-origin:0 50%;top:377.78px;line-height:14px;font-size:10px;color:#454545;transform:scaleX(0.8286);">руб.</div>
<div class="a" style="left:517.5px;width:300px;text-align:right;transform-origin:100% 50%;top:377.78px;line-height:14px;font-size:10px;color:#454545;transform:scaleX(0.9380);">1 335 211,26</div>
<div class="a" style="left:7px;top:394.54px;width:384.5px;height:21.32px;background:#f4f4f4"></div>
<div class="a" style="left:518.5px;top:394.54px;width:38.80px;height:21.32px;background:#f4f4f4"></div>
<div class="a" style="left:7px;top:394.54px;width:550.30px;height:1px;background:#fcfcfc"></div>
<div class="a" style="left:391.5px;top:394.54px;width:127px;height:1px;background:#eeeeee"></div>
<div class="a" style="left:557.3px;top:394.54px;width:88.85px;height:1px;background:#c8e3c8"></div>
<div class="a" style="left:646.15px;top:394.54px;width:619.35px;height:1px;background:#bff1f1"></div>
<div class="a" style="left:13.7px;top:399.30px;width:11.3px;height:11.8px;border:1px solid #b3b3b3;border-radius:2px;background:#fff"></div>
<svg class="a" style="left:224px;top:399.30px" width="13" height="13" viewBox="0 0 13 13"><circle cx="6.4" cy="6.3" r="5.4" fill="#f1f4f8" stroke="#b5becb" stroke-width="1.5"/><circle cx="6.4" cy="6.3" r="4" fill="none" stroke="#dde4ee" stroke-width="0.9"/><path d="M6.6 2.4 V6.8 L4.9 9.4" fill="none" stroke="#4d5a76" stroke-width="1.25"/></svg>
<div class="a" style="left:244px;transform-origin:0 50%;top:399.10px;line-height:14px;font-size:10px;color:#454545;transform:scaleX(0.9380);">Заявка № 10 от 24.04.2013</div>
<div class="a" style="left:398.3px;transform-origin:0 50%;top:399.10px;line-height:14px;font-size:10px;color:#454545;transform:scaleX(0.9403);">ВЭБ</div>
<div class="a" style="left:525px;transform-origin:0 50%;top:399.10px;line-height:14px;font-size:10px;color:#454545;transform:scaleX(0.8286);">руб.</div>
<div class="a" style="left:695.2px;width:300px;text-align:right;transform-origin:100% 50%;top:399.10px;line-height:14px;font-size:10px;color:#454545;transform:scaleX(0.9380);">1 335 211,26</div>
<div class="a" style="left:7px;top:415.86px;width:384.5px;height:21.32px;background:#f4f4f4"></div>
<div class="a" style="left:518.5px;top:415.86px;width:38.80px;height:21.32px;background:#f4f4f4"></div>
<div class="a" style="left:7px;top:415.86px;width:550.30px;height:1px;background:#fcfcfc"></div>
<div class="a" style="left:391.5px;top:415.86px;width:127px;height:1px;background:#eeeeee"></div>
<div class="a" style="left:557.3px;top:415.86px;width:88.85px;height:1px;background:#c8e3c8"></div>
<div class="a" style="left:646.15px;top:415.86px;width:619.35px;height:1px;background:#bff1f1"></div>
<div class="a" style="left:13.7px;top:420.62px;width:11.3px;height:11.8px;border:1px solid #b3b3b3;border-radius:2px;background:#fff"></div>
<svg class="a" style="left:224px;top:420.62px" width="13" height="13" viewBox="0 0 13 13"><circle cx="6.4" cy="6.3" r="5.4" fill="#f1f4f8" stroke="#b5becb" stroke-width="1.5"/><circle cx="6.4" cy="6.3" r="4" fill="none" stroke="#dde4ee" stroke-width="0.9"/><path d="M6.6 2.4 V6.8 L4.9 9.4" fill="none" stroke="#4d5a76" stroke-width="1.25"/></svg>
<div class="a" style="left:244px;transform-origin:0 50%;top:420.42px;line-height:14px;font-size:10px;color:#454545;transform:scaleX(0.9380);">Заявка № 11 от 24.04.2013</div>
<div class="a" style="left:398.3px;transform-origin:0 50%;top:420.42px;line-height:14px;font-size:10px;color:#454545;transform:scaleX(0.9403);">ВЭБ</div>
<div class="a" style="left:525px;transform-origin:0 50%;top:420.42px;line-height:14px;font-size:10px;color:#454545;transform:scaleX(0.8286);">руб.</div>
<div class="a" style="left:428.65px;width:300px;text-align:right;transform-origin:100% 50%;top:420.42px;line-height:14px;font-size:10px;color:#454545;transform:scaleX(0.9380);">1 335 211,26</div>
<div class="a" style="left:7px;top:437.18px;width:384.5px;height:21.32px;background:#f4f4f4"></div>
<div class="a" style="left:518.5px;top:437.18px;width:38.80px;height:21.32px;background:#f4f4f4"></div>
<div class="a" style="left:7px;top:438.08px;width:384.5px;height:18.6px;background:#e1e1e1"></div>
<div class="a" style="left:518.5px;top:438.08px;width:38.80px;height:18.6px;background:#e1e1e1"></div>
<div class="a" style="left:391.5px;top:437.68px;width:127px;height:19.200000000000003px;background:#fdf0c0"></div>
<div class="a" style="left:145.3px;top:438.08px;width:1px;height:18.6px;background:#eeeeee"></div>
<div class="a" style="left:557.3px;top:436.88px;width:88.85px;height:20.52px;background:#edf5ed"></div>
<div class="a" style="left:646.15px;top:436.88px;width:619.35px;height:20.52px;background:#e6f8f8"></div>
<div class="a" style="left:824.15px;top:438.98px;width:87.5px;height:18.12px;background:#d6f4f4;border:1px solid #9b9b9b"></div>
<div class="a" style="left:7px;top:437.18px;width:550.30px;height:1px;background:#fcfcfc"></div>
<div class="a" style="left:391.5px;top:437.18px;width:127px;height:1px;background:#eeeeee"></div>
<div class="a" style="left:13.7px;top:441.94px;width:11.3px;height:11.8px;border:1px solid #b3b3b3;border-radius:2px;background:#fff"></div>
<svg class="a" style="left:224px;top:441.94px" width="13" height="13" viewBox="0 0 13 13"><circle cx="6.4" cy="6.3" r="5.4" fill="#f1f4f8" stroke="#b5becb" stroke-width="1.5"/><circle cx="6.4" cy="6.3" r="4" fill="none" stroke="#dde4ee" stroke-width="0.9"/><path d="M6.6 2.4 V6.8 L4.9 9.4" fill="none" stroke="#4d5a76" stroke-width="1.25"/></svg>
<div class="a" style="left:244px;transform-origin:0 50%;top:441.74px;line-height:14px;font-size:10px;color:#454545;transform:scaleX(0.9380);">Заявка № 34 от 08.05.2013</div>
<div class="a" style="left:398.3px;transform-origin:0 50%;top:441.74px;line-height:14px;font-size:10px;color:#454545;transform:scaleX(0.8526);">БОРА</div>
<div class="a" style="left:525px;transform-origin:0 50%;top:441.74px;line-height:14px;font-size:10px;color:#454545;transform:scaleX(0.8286);">руб.</div>
<div class="a" style="left:606.35px;width:300px;text-align:right;transform-origin:100% 50%;top:441.74px;line-height:14px;font-size:10px;color:#454545;transform:scaleX(0.9380);">225 454,55</div>
<div class="a" style="left:7px;top:458.50px;width:384.5px;height:21.32px;background:#f4f4f4"></div>
<div class="a" style="left:518.5px;top:458.50px;width:38.80px;height:21.32px;background:#f4f4f4"></div>
<div class="a" style="left:7px;top:458.50px;width:550.30px;height:1px;background:#fcfcfc"></div>
<div class="a" style="left:391.5px;top:458.50px;width:127px;height:1px;background:#eeeeee"></div>
<div class="a" style="left:13.7px;top:463.26px;width:11.3px;height:11.8px;border:1px solid #b3b3b3;border-radius:2px;background:#fff"></div>
<svg class="a" style="left:224px;top:463.26px" width="13" height="13" viewBox="0 0 13 13"><circle cx="6.4" cy="6.3" r="5.4" fill="#f1f4f8" stroke="#b5becb" stroke-width="1.5"/><circle cx="6.4" cy="6.3" r="4" fill="none" stroke="#dde4ee" stroke-width="0.9"/><path d="M6.6 2.4 V6.8 L4.9 9.4" fill="none" stroke="#4d5a76" stroke-width="1.25"/></svg>
<div class="a" style="left:244px;transform-origin:0 50%;top:463.06px;line-height:14px;font-size:10px;color:#454545;transform:scaleX(0.9380);">Заявка № 35 от 08.05.2013</div>
<div class="a" style="left:398.3px;transform-origin:0 50%;top:463.06px;line-height:14px;font-size:10px;color:#454545;transform:scaleX(0.8526);">БОРА</div>
<div class="a" style="left:525px;transform-origin:0 50%;top:463.06px;line-height:14px;font-size:10px;color:#454545;transform:scaleX(0.8286);">руб.</div>
<div class="a" style="left:428.65px;width:300px;text-align:right;transform-origin:100% 50%;top:463.06px;line-height:14px;font-size:10px;color:#454545;transform:scaleX(0.9380);">225 454,55</div>
<div class="a" style="left:7px;top:479.82px;width:384.5px;height:21.32px;background:#f4f4f4"></div>
<div class="a" style="left:518.5px;top:479.82px;width:38.80px;height:21.32px;background:#f4f4f4"></div>
<div class="a" style="left:7px;top:479.82px;width:550.30px;height:1px;background:#fcfcfc"></div>
<div class="a" style="left:391.5px;top:479.82px;width:127px;height:1px;background:#eeeeee"></div>
<div class="a" style="left:557.3px;top:479.82px;width:88.85px;height:1px;background:#c8e3c8"></div>
<div class="a" style="left:646.15px;top:479.82px;width:619.35px;height:1px;background:#bff1f1"></div>
<div class="a" style="left:13.7px;top:484.58px;width:11.3px;height:11.8px;border:1px solid #b3b3b3;border-radius:2px;background:#fff"></div>
<svg class="a" style="left:224px;top:484.58px" width="13" height="13" viewBox="0 0 13 13"><circle cx="6.4" cy="6.3" r="5.4" fill="#f1f4f8" stroke="#b5becb" stroke-width="1.5"/><circle cx="6.4" cy="6.3" r="4" fill="none" stroke="#dde4ee" stroke-width="0.9"/><path d="M6.6 2.4 V6.8 L4.9 9.4" fill="none" stroke="#4d5a76" stroke-width="1.25"/></svg>
<div class="a" style="left:244px;transform-origin:0 50%;top:484.38px;line-height:14px;font-size:10px;color:#454545;transform:scaleX(0.9380);">Заявка № 36 от 08.05.2013</div>
<div class="a" style="left:398.3px;transform-origin:0 50%;top:484.38px;line-height:14px;font-size:10px;color:#454545;transform:scaleX(0.8526);">БОРА</div>
<div class="a" style="left:525px;transform-origin:0 50%;top:484.38px;line-height:14px;font-size:10px;color:#454545;transform:scaleX(0.8286);">руб.</div>
<div class="a" style="left:7px;top:501.14px;width:384.5px;height:21.32px;background:#f4f4f4"></div>
<div class="a" style="left:518.5px;top:501.14px;width:38.80px;height:21.32px;background:#f4f4f4"></div>
<div class="a" style="left:7px;top:501.14px;width:550.30px;height:1px;background:#fcfcfc"></div>
<div class="a" style="left:391.5px;top:501.14px;width:127px;height:1px;background:#eeeeee"></div>
<div class="a" style="left:557.3px;top:501.14px;width:88.85px;height:1px;background:#c8e3c8"></div>
<div class="a" style="left:646.15px;top:501.14px;width:619.35px;height:1px;background:#bff1f1"></div>
<div class="a" style="left:13.7px;top:505.90px;width:11.3px;height:11.8px;border:1px solid #b3b3b3;border-radius:2px;background:#fff"></div>
<svg class="a" style="left:224px;top:505.90px" width="13" height="13" viewBox="0 0 13 13"><circle cx="6.4" cy="6.3" r="5.4" fill="#f1f4f8" stroke="#b5becb" stroke-width="1.5"/><circle cx="6.4" cy="6.3" r="4" fill="none" stroke="#dde4ee" stroke-width="0.9"/><path d="M6.6 2.4 V6.8 L4.9 9.4" fill="none" stroke="#4d5a76" stroke-width="1.25"/></svg>
<div class="a" style="left:244px;transform-origin:0 50%;top:505.70px;line-height:14px;font-size:10px;color:#454545;transform:scaleX(0.9380);">Заявка № 37 от 08.05.2013</div>
<div class="a" style="left:398.3px;transform-origin:0 50%;top:505.70px;line-height:14px;font-size:10px;color:#454545;transform:scaleX(0.8526);">БОРА</div>
<div class="a" style="left:525px;transform-origin:0 50%;top:505.70px;line-height:14px;font-size:10px;color:#454545;transform:scaleX(0.8286);">руб.</div>
<div class="a" style="left:872.9000000000001px;width:300px;text-align:right;transform-origin:100% 50%;top:505.70px;line-height:14px;font-size:10px;color:#454545;transform:scaleX(0.9380);">225 454,55</div>
<div class="a" style="left:7px;top:522.46px;width:384.5px;height:21.32px;background:#f4f4f4"></div>
<div class="a" style="left:518.5px;top:522.46px;width:38.80px;height:21.32px;background:#f4f4f4"></div>
<div class="a" style="left:7px;top:522.46px;width:550.30px;height:1px;background:#fcfcfc"></div>
<div class="a" style="left:391.5px;top:522.46px;width:127px;height:1px;background:#eeeeee"></div>
<div class="a" style="left:557.3px;top:522.46px;width:88.85px;height:1px;background:#c8e3c8"></div>
<div class="a" style="left:646.15px;top:522.46px;width:619.35px;height:1px;background:#bff1f1"></div>
<div class="a" style="left:13.7px;top:527.22px;width:11.3px;height:11.8px;border:1px solid #b3b3b3;border-radius:2px;background:#fff"></div><svg class="a" style="left:13.7px;top:525.22px" width="14" height="14" viewBox="0 0 14 14"><path d="M2.5 6.8 L5.7 9.7 L11.9 2.2" fill="none" stroke="#1b8c5c" stroke-width="2.3"/></svg>
<svg class="a" style="left:224px;top:527.22px" width="13" height="13" viewBox="0 0 13 13"><circle cx="6.4" cy="6.3" r="5.4" fill="#f1f4f8" stroke="#b5becb" stroke-width="1.5"/><circle cx="6.4" cy="6.3" r="4" fill="none" stroke="#dde4ee" stroke-width="0.9"/><path d="M6.6 2.4 V6.8 L4.9 9.4" fill="none" stroke="#4d5a76" stroke-width="1.25"/></svg>
<div class="a" style="left:244px;transform-origin:0 50%;top:527.02px;line-height:14px;font-size:10px;color:#454545;transform:scaleX(0.9380);">Заявка № 40 от 13.06.2013</div>
<div class="a" style="left:398.3px;transform-origin:0 50%;top:527.02px;line-height:14px;font-size:10px;color:#454545;transform:scaleX(0.9181);">Артель Балтики</div>
<div class="a" style="left:525px;transform-origin:0 50%;top:527.02px;line-height:14px;font-size:10px;color:#454545;transform:scaleX(0.8286);">руб.</div>
<div class="a" style="left:339.79999999999995px;width:300px;text-align:right;transform-origin:100% 50%;top:527.02px;line-height:14px;font-size:10px;color:#454545;transform:scaleX(0.9380);">120 000,00</div>
<div class="a" style="left:7px;top:543.78px;width:384.5px;height:21.32px;background:#f4f4f4"></div>
<div class="a" style="left:518.5px;top:543.78px;width:38.80px;height:21.32px;background:#f4f4f4"></div>
<div class="a" style="left:7px;top:543.78px;width:550.30px;height:1px;background:#fcfcfc"></div>
<div class="a" style="left:391.5px;top:543.78px;width:127px;height:1px;background:#eeeeee"></div>
<div class="a" style="left:557.3px;top:543.78px;width:88.85px;height:1px;background:#c8e3c8"></div>
<div class="a" style="left:646.15px;top:543.78px;width:619.35px;height:1px;background:#bff1f1"></div>
<div class="a" style="left:13.7px;top:548.54px;width:11.3px;height:11.8px;border:1px solid #b3b3b3;border-radius:2px;background:#fff"></div><svg class="a" style="left:13.7px;top:546.54px" width="14" height="14" viewBox="0 0 14 14"><path d="M2.5 6.8 L5.7 9.7 L11.9 2.2" fill="none" stroke="#1b8c5c" stroke-width="2.3"/></svg>
<svg class="a" style="left:224px;top:548.54px" width="13" height="13" viewBox="0 0 13 13"><circle cx="6.4" cy="6.3" r="5.4" fill="#f1f4f8" stroke="#b5becb" stroke-width="1.5"/><circle cx="6.4" cy="6.3" r="4" fill="none" stroke="#dde4ee" stroke-width="0.9"/><path d="M6.6 2.4 V6.8 L4.9 9.4" fill="none" stroke="#4d5a76" stroke-width="1.25"/></svg>
<div class="a" style="left:244px;transform-origin:0 50%;top:548.34px;line-height:14px;font-size:10px;color:#454545;transform:scaleX(0.9380);">Заявка № 42 от 13.06.2013</div>
<div class="a" style="left:398.3px;transform-origin:0 50%;top:548.34px;line-height:14px;font-size:10px;color:#454545;transform:scaleX(0.9181);">Артель Балтики</div>
<div class="a" style="left:525px;transform-origin:0 50%;top:548.34px;line-height:14px;font-size:10px;color:#454545;transform:scaleX(0.8286);">руб.</div>
<div class="a" style="left:517.5px;width:300px;text-align:right;transform-origin:100% 50%;top:548.34px;line-height:14px;font-size:10px;color:#454545;transform:scaleX(0.9380);">120 000,00</div>
<div class="a" style="left:7px;top:565.10px;width:384.5px;height:21.32px;background:#f4f4f4"></div>
<div class="a" style="left:518.5px;top:565.10px;width:38.80px;height:21.32px;background:#f4f4f4"></div>
<div class="a" style="left:7px;top:565.10px;width:550.30px;height:1px;background:#fcfcfc"></div>
<div class="a" style="left:391.5px;top:565.10px;width:127px;height:1px;background:#eeeeee"></div>
<div class="a" style="left:557.3px;top:565.10px;width:88.85px;height:1px;background:#c8e3c8"></div>
<div class="a" style="left:646.15px;top:565.10px;width:619.35px;height:1px;background:#bff1f1"></div>
<div class="a" style="left:13.7px;top:569.86px;width:11.3px;height:11.8px;border:1px solid #b3b3b3;border-radius:2px;background:#fff"></div><svg class="a" style="left:13.7px;top:567.86px" width="14" height="14" viewBox="0 0 14 14"><path d="M2.5 6.8 L5.7 9.7 L11.9 2.2" fill="none" stroke="#1b8c5c" stroke-width="2.3"/></svg>
<svg class="a" style="left:224px;top:569.86px" width="13" height="13" viewBox="0 0 13 13"><circle cx="6.4" cy="6.3" r="5.4" fill="#f1f4f8" stroke="#b5becb" stroke-width="1.5"/><circle cx="6.4" cy="6.3" r="4" fill="none" stroke="#dde4ee" stroke-width="0.9"/><path d="M6.6 2.4 V6.8 L4.9 9.4" fill="none" stroke="#4d5a76" stroke-width="1.25"/></svg>
<div class="a" style="left:244px;transform-origin:0 50%;top:569.66px;line-height:14px;font-size:10px;color:#454545;transform:scaleX(0.9380);">Заявка № 43 от 13.06.2013</div>
<div class="a" style="left:398.3px;transform-origin:0 50%;top:569.66px;line-height:14px;font-size:10px;color:#454545;transform:scaleX(0.9181);">Артель Балтики</div>
<div class="a" style="left:525px;transform-origin:0 50%;top:569.66px;line-height:14px;font-size:10px;color:#454545;transform:scaleX(0.8286);">руб.</div>
<div class="a" style="left:339.79999999999995px;width:300px;text-align:right;transform-origin:100% 50%;top:569.66px;line-height:14px;font-size:10px;color:#454545;transform:scaleX(0.9380);">44 760,00</div>
<div class="a" style="left:7px;top:586.42px;width:384.5px;height:21.32px;background:#f4f4f4"></div>
<div class="a" style="left:518.5px;top:586.42px;width:38.80px;height:21.32px;background:#f4f4f4"></div>
<div class="a" style="left:7px;top:586.42px;width:550.30px;height:1px;background:#fcfcfc"></div>
<div class="a" style="left:391.5px;top:586.42px;width:127px;height:1px;background:#eeeeee"></div>
<div class="a" style="left:557.3px;top:586.42px;width:88.85px;height:1px;background:#c8e3c8"></div>
<div class="a" style="left:646.15px;top:586.42px;width:619.35px;height:1px;background:#bff1f1"></div>
<div class="a" style="left:13.7px;top:591.18px;width:11.3px;height:11.8px;border:1px solid #b3b3b3;border-radius:2px;background:#fff"></div><svg class="a" style="left:13.7px;top:589.18px" width="14" height="14" viewBox="0 0 14 14"><path d="M2.5 6.8 L5.7 9.7 L11.9 2.2" fill="none" stroke="#1b8c5c" stroke-width="2.3"/></svg>
<svg class="a" style="left:224px;top:591.18px" width="13" height="13" viewBox="0 0 13 13"><circle cx="6.4" cy="6.3" r="5.4" fill="#f1f4f8" stroke="#b5becb" stroke-width="1.5"/><circle cx="6.4" cy="6.3" r="4" fill="none" stroke="#dde4ee" stroke-width="0.9"/><path d="M6.6 2.4 V6.8 L4.9 9.4" fill="none" stroke="#4d5a76" stroke-width="1.25"/></svg>
<div class="a" style="left:244px;transform-origin:0 50%;top:590.98px;line-height:14px;font-size:10px;color:#454545;transform:scaleX(0.9380);">Заявка № 44 от 13.06.2013</div>
<div class="a" style="left:398.3px;transform-origin:0 50%;top:590.98px;line-height:14px;font-size:10px;color:#454545;transform:scaleX(0.9181);">Артель Балтики</div>
<div class="a" style="left:525px;transform-origin:0 50%;top:590.98px;line-height:14px;font-size:10px;color:#454545;transform:scaleX(0.8286);">руб.</div>
<div class="a" style="left:339.79999999999995px;width:300px;text-align:right;transform-origin:100% 50%;top:590.98px;line-height:14px;font-size:10px;color:#454545;transform:scaleX(0.9380);">1 177 850,00</div>
<div class="a" style="left:7px;top:607.74px;width:384.5px;height:21.32px;background:#f4f4f4"></div>
<div class="a" style="left:518.5px;top:607.74px;width:38.80px;height:21.32px;background:#f4f4f4"></div>
<div class="a" style="left:7px;top:607.74px;width:550.30px;height:1px;background:#fcfcfc"></div>
<div class="a" style="left:391.5px;top:607.74px;width:127px;height:1px;background:#eeeeee"></div>
<div class="a" style="left:557.3px;top:607.74px;width:88.85px;height:1px;background:#c8e3c8"></div>
<div class="a" style="left:646.15px;top:607.74px;width:619.35px;height:1px;background:#bff1f1"></div>
<div class="a" style="left:13.7px;top:612.50px;width:11.3px;height:11.8px;border:1px solid #b3b3b3;border-radius:2px;background:#fff"></div><svg class="a" style="left:13.7px;top:610.50px" width="14" height="14" viewBox="0 0 14 14"><path d="M2.5 6.8 L5.7 9.7 L11.9 2.2" fill="none" stroke="#1b8c5c" stroke-width="2.3"/></svg>
<svg class="a" style="left:224px;top:612.50px" width="13" height="13" viewBox="0 0 13 13"><circle cx="6.4" cy="6.3" r="5.4" fill="#f1f4f8" stroke="#b5becb" stroke-width="1.5"/><circle cx="6.4" cy="6.3" r="4" fill="none" stroke="#dde4ee" stroke-width="0.9"/><path d="M6.6 2.4 V6.8 L4.9 9.4" fill="none" stroke="#4d5a76" stroke-width="1.25"/></svg>
<div class="a" style="left:244px;transform-origin:0 50%;top:612.30px;line-height:14px;font-size:10px;color:#454545;transform:scaleX(0.9380);">Заявка № 45 от 13.06.2013</div>
<div class="a" style="left:398.3px;transform-origin:0 50%;top:612.30px;line-height:14px;font-size:10px;color:#454545;transform:scaleX(0.9181);">Артель Балтики</div>
<div class="a" style="left:525px;transform-origin:0 50%;top:612.30px;line-height:14px;font-size:10px;color:#454545;transform:scaleX(0.8286);">руб.</div>
<div class="a" style="left:7px;top:629.06px;width:384.5px;height:21.32px;background:#f4f4f4"></div>
<div class="a" style="left:518.5px;top:629.06px;width:38.80px;height:21.32px;background:#f4f4f4"></div>
<div class="a" style="left:7px;top:629.06px;width:550.30px;height:1px;background:#fcfcfc"></div>
<div class="a" style="left:391.5px;top:629.06px;width:127px;height:1px;background:#eeeeee"></div>
<div class="a" style="left:557.3px;top:629.06px;width:88.85px;height:1px;background:#c8e3c8"></div>
<div class="a" style="left:646.15px;top:629.06px;width:619.35px;height:1px;background:#bff1f1"></div>
<div class="a" style="left:13.7px;top:633.82px;width:11.3px;height:11.8px;border:1px solid #b3b3b3;border-radius:2px;background:#fff"></div><svg class="a" style="left:13.7px;top:631.82px" width="14" height="14" viewBox="0 0 14 14"><path d="M2.5 6.8 L5.7 9.7 L11.9 2.2" fill="none" stroke="#1b8c5c" stroke-width="2.3"/></svg>
<svg class="a" style="left:224px;top:633.82px" width="13" height="13" viewBox="0 0 13 13"><circle cx="6.4" cy="6.3" r="5.4" fill="#f1f4f8" stroke="#b5becb" stroke-width="1.5"/><circle cx="6.4" cy="6.3" r="4" fill="none" stroke="#dde4ee" stroke-width="0.9"/><path d="M6.6 2.4 V6.8 L4.9 9.4" fill="none" stroke="#4d5a76" stroke-width="1.25"/></svg>
<div class="a" style="left:244px;transform-origin:0 50%;top:633.62px;line-height:14px;font-size:10px;color:#454545;transform:scaleX(0.9380);">Заявка № 46 от 13.06.2013</div>
<div class="a" style="left:398.3px;transform-origin:0 50%;top:633.62px;line-height:14px;font-size:10px;color:#454545;transform:scaleX(0.9181);">Артель Балтики</div>
<div class="a" style="left:525px;transform-origin:0 50%;top:633.62px;line-height:14px;font-size:10px;color:#454545;transform:scaleX(0.8286);">руб.</div>
<div class="a" style="left:7px;top:650.38px;width:384.5px;height:21.32px;background:#f4f4f4"></div>
<div class="a" style="left:518.5px;top:650.38px;width:38.80px;height:21.32px;background:#f4f4f4"></div>
<div class="a" style="left:7px;top:650.38px;width:550.30px;height:1px;background:#fcfcfc"></div>
<div class="a" style="left:391.5px;top:650.38px;width:127px;height:1px;background:#eeeeee"></div>
<div class="a" style="left:557.3px;top:650.38px;width:88.85px;height:1px;background:#c8e3c8"></div>
<div class="a" style="left:646.15px;top:650.38px;width:619.35px;height:1px;background:#bff1f1"></div>
<div class="a" style="left:13.7px;top:655.14px;width:11.3px;height:11.8px;border:1px solid #b3b3b3;border-radius:2px;background:#fff"></div><svg class="a" style="left:13.7px;top:653.14px" width="14" height="14" viewBox="0 0 14 14"><path d="M2.5 6.8 L5.7 9.7 L11.9 2.2" fill="none" stroke="#1b8c5c" stroke-width="2.3"/></svg>
<svg class="a" style="left:224px;top:655.14px" width="13" height="13" viewBox="0 0 13 13"><circle cx="6.4" cy="6.3" r="5.4" fill="#f1f4f8" stroke="#b5becb" stroke-width="1.5"/><circle cx="6.4" cy="6.3" r="4" fill="none" stroke="#dde4ee" stroke-width="0.9"/><path d="M6.6 2.4 V6.8 L4.9 9.4" fill="none" stroke="#4d5a76" stroke-width="1.25"/></svg>
<div class="a" style="left:244px;transform-origin:0 50%;top:654.94px;line-height:14px;font-size:10px;color:#454545;transform:scaleX(0.9380);">Заявка № 48 от 09.09.2013</div>
<div class="a" style="left:398.3px;transform-origin:0 50%;top:654.94px;line-height:14px;font-size:10px;color:#454545;transform:scaleX(0.9416);">Торговый дом "Комплек...</div>
<div class="a" style="left:525px;transform-origin:0 50%;top:654.94px;line-height:14px;font-size:10px;color:#454545;transform:scaleX(0.8286);">руб.</div>
<div class="a" style="left:7px;top:671.70px;width:384.5px;height:21.32px;background:#f4f4f4"></div>
<div class="a" style="left:518.5px;top:671.70px;width:38.80px;height:21.32px;background:#f4f4f4"></div>
<div class="a" style="left:7px;top:671.70px;width:550.30px;height:1px;background:#fcfcfc"></div>
<div class="a" style="left:391.5px;top:671.70px;width:127px;height:1px;background:#eeeeee"></div>
<div class="a" style="left:557.3px;top:671.70px;width:88.85px;height:1px;background:#c8e3c8"></div>
<div class="a" style="left:646.15px;top:671.70px;width:619.35px;height:1px;background:#bff1f1"></div>
<div class="a" style="left:13.7px;top:676.46px;width:11.3px;height:11.8px;border:1px solid #b3b3b3;border-radius:2px;background:#fff"></div><svg class="a" style="left:13.7px;top:674.46px" width="14" height="14" viewBox="0 0 14 14"><path d="M2.5 6.8 L5.7 9.7 L11.9 2.2" fill="none" stroke="#1b8c5c" stroke-width="2.3"/></svg>
<svg class="a" style="left:224px;top:676.46px" width="13" height="13" viewBox="0 0 13 13"><circle cx="6.4" cy="6.3" r="5.4" fill="#f1f4f8" stroke="#b5becb" stroke-width="1.5"/><circle cx="6.4" cy="6.3" r="4" fill="none" stroke="#dde4ee" stroke-width="0.9"/><path d="M6.6 2.4 V6.8 L4.9 9.4" fill="none" stroke="#4d5a76" stroke-width="1.25"/></svg>
<div class="a" style="left:244px;transform-origin:0 50%;top:676.26px;line-height:14px;font-size:10px;color:#454545;transform:scaleX(0.9380);">Заявка № 4 от 03.01.2015</div>
<div class="a" style="left:398.3px;transform-origin:0 50%;top:676.26px;line-height:14px;font-size:10px;color:#454545;transform:scaleX(0.8782);">Мосимущество</div>
<div class="a" style="left:525px;transform-origin:0 50%;top:676.26px;line-height:14px;font-size:10px;color:#454545;transform:scaleX(0.8286);">руб.</div>
<div class="a" style="left:7px;top:693.02px;width:384.5px;height:21.32px;background:#f4f4f4"></div>
<div class="a" style="left:518.5px;top:693.02px;width:38.80px;height:21.32px;background:#f4f4f4"></div>
<div class="a" style="left:7px;top:693.02px;width:550.30px;height:1px;background:#fcfcfc"></div>
<div class="a" style="left:391.5px;top:693.02px;width:127px;height:1px;background:#eeeeee"></div>
<div class="a" style="left:557.3px;top:693.02px;width:88.85px;height:1px;background:#c8e3c8"></div>
<div class="a" style="left:646.15px;top:693.02px;width:619.35px;height:1px;background:#bff1f1"></div>
<div class="a" style="left:13.7px;top:697.78px;width:11.3px;height:11.8px;border:1px solid #b3b3b3;border-radius:2px;background:#fff"></div><svg class="a" style="left:13.7px;top:695.78px" width="14" height="14" viewBox="0 0 14 14"><path d="M2.5 6.8 L5.7 9.7 L11.9 2.2" fill="none" stroke="#1b8c5c" stroke-width="2.3"/></svg>
<svg class="a" style="left:224px;top:697.78px" width="13" height="13" viewBox="0 0 13 13"><circle cx="6.4" cy="6.3" r="5.4" fill="#f1f4f8" stroke="#b5becb" stroke-width="1.5"/><circle cx="6.4" cy="6.3" r="4" fill="none" stroke="#dde4ee" stroke-width="0.9"/><path d="M6.6 2.4 V6.8 L4.9 9.4" fill="none" stroke="#4d5a76" stroke-width="1.25"/></svg>
<div class="a" style="left:244px;transform-origin:0 50%;top:697.58px;line-height:14px;font-size:10px;color:#454545;transform:scaleX(0.9380);">Заявка № 5 от 03.01.2015</div>
<div class="a" style="left:398.3px;transform-origin:0 50%;top:697.58px;line-height:14px;font-size:10px;color:#454545;transform:scaleX(0.8782);">Мосимущество</div>
<div class="a" style="left:525px;transform-origin:0 50%;top:697.58px;line-height:14px;font-size:10px;color:#454545;transform:scaleX(0.8286);">руб.</div>
</div>
<div class="a" style="left:1264.5px;top:91.5px;width:12px;height:612px;background:#fff"></div>
<div class="a" style="left:1267.9px;top:109.5px;width:6.2px;height:574.5px;background:#d9d9d9;border-radius:3px"></div>
<div class="a" style="left:1267.9px;top:109.5px;width:6.2px;height:211.5px;background:#9a9a9a;border-radius:3px"></div>
<div class="a" style="left:1268.6px;top:99.5px;width:0;height:0;border-left:2.2px solid transparent;border-right:2.2px solid transparent;border-bottom:2.4px solid #b0b0b0"></div>
<div class="a" style="left:1268.6px;top:691.5px;width:0;height:0;border-left:2.4px solid transparent;border-right:2.4px solid transparent;border-top:2.8px solid #555"></div>
<div class="a" style="left:7px;top:701.5px;width:1269px;height:10.5px;background:#fff"></div>
<div class="a" style="left:25px;top:704.2px;width:1222.5px;height:5.5px;background:#dcdcdc;border-radius:3px"></div>
<div class="a" style="left:746px;top:704.2px;width:283.5px;height:5.5px;background:#9c9c9c;border-radius:3px"></div>
<div class="a" style="left:13.8px;top:704.3px;width:0;height:0;border-top:2.7px solid transparent;border-bottom:2.7px solid transparent;border-right:3.2px solid #4a4a4a"></div>
<div class="a" style="left:1255px;top:704.3px;width:0;height:0;border-top:2.7px solid transparent;border-bottom:2.7px solid transparent;border-left:3.2px solid #4a4a4a"></div>
<div class="a" style="left:7px;transform-origin:0 50%;top:719.20px;line-height:14px;font-size:10px;color:#707070;transform:scaleX(0.8743);">Сумма:</div>
<div class="a" style="left:51.2px;transform-origin:0 50%;top:719.20px;line-height:14px;font-size:10px;font-weight:bold;color:#2e2e2e;transform:scaleX(0.9779);">3 218 316,67</div>
<div class="a" style="left:173px;transform-origin:0 50%;top:719.20px;line-height:14px;font-size:10px;color:#707070;transform:scaleX(0.9030);">Количество:</div>
<div class="a" style="left:230px;transform-origin:0 50%;top:719.20px;line-height:14px;font-size:10px;font-weight:bold;color:#2e2e2e;transform:scaleX(0.8361);">10</div>
<div class="a" style="left:349.5px;transform-origin:0 50%;top:719.20px;line-height:14px;font-size:10px;color:#707070;transform:scaleX(0.9129);">Минимум:</div>
<div class="a" style="left:397.5px;transform-origin:0 50%;top:719.20px;line-height:14px;font-size:10px;font-weight:bold;color:#2e2e2e;transform:scaleX(0.9553);">19 000,00</div>
<div class="a" style="left:517.5px;transform-origin:0 50%;top:719.20px;line-height:14px;font-size:10px;color:#707070;transform:scaleX(0.9329);">Максимум:</div>
<div class="a" style="left:570px;transform-origin:0 50%;top:719.20px;line-height:14px;font-size:10px;font-weight:bold;color:#2e2e2e;transform:scaleX(0.9505);">1 450 850,00</div>
<div class="a" style="left:690.7px;transform-origin:0 50%;top:719.20px;line-height:14px;font-size:10px;color:#707070;transform:scaleX(0.9128);">Среднее:</div>
<div class="a" style="left:735px;transform-origin:0 50%;top:719.20px;line-height:14px;font-size:10px;font-weight:bold;color:#2e2e2e;transform:scaleX(0.9730);">321 831,67</div>
<div class="a" style="left:862.5px;top:447px;width:276px;height:164px;background:#fff;border:1px solid #e3e3e3;box-shadow:1.5px 2px 3px rgba(0,50,50,.55)"></div>
<div class="a" style="left:863.5px;top:447.5px;width:273.5px;height:22.5px;background:#f9c926"></div>
<div class="a" style="left:896.3px;transform-origin:0 50%;top:452.80px;line-height:14px;font-size:10px;color:#4c4c4c;transform:scaleX(0.9753);">Перенести в оперативный день</div>
<div class="a" style="left:1087.2px;transform-origin:0 50%;top:452.80px;line-height:14px;font-size:10px;color:#b08a22;transform:scaleX(0.9599);">Ctrl+O</div>
<div class="a" style="left:896.3px;transform-origin:0 50%;top:476.00px;line-height:14px;font-size:10px;color:#4c4c4c;transform:scaleX(0.9745);">Перенести на дату</div>
<div class="a" style="left:1087.2px;transform-origin:0 50%;top:476.00px;line-height:14px;font-size:10px;color:#adadad;transform:scaleX(0.9786);">Ctrl+D</div>
<div class="a" style="left:896.3px;transform-origin:0 50%;top:498.50px;line-height:14px;font-size:10px;color:#4c4c4c;transform:scaleX(0.9746);">Перенести на счет</div>
<div class="a" style="left:1087.2px;transform-origin:0 50%;top:498.50px;line-height:14px;font-size:10px;color:#adadad;transform:scaleX(0.9978);">Ctrl+B</div>
<div class="a" style="left:896.3px;transform-origin:0 50%;top:521.00px;line-height:14px;font-size:10px;color:#4c4c4c;transform:scaleX(0.9690);">Изменить платеж</div>
<div class="a" style="left:896.3px;transform-origin:0 50%;top:543.80px;line-height:14px;font-size:10px;color:#4c4c4c;transform:scaleX(0.9685);">Разбить платеж</div>
<div class="a" style="left:896.3px;transform-origin:0 50%;top:567.00px;line-height:14px;font-size:10px;color:#4c4c4c;transform:scaleX(0.9924);">Перевод между счетами</div>
<div class="a" style="left:896.3px;transform-origin:0 50%;top:592.60px;line-height:14px;font-size:10px;color:#4c4c4c;transform:scaleX(0.9982);">Вывести список...</div>
<div class="a" style="left:866px;top:586px;width:269px;height:1px;background:#dedede"></div>
<svg class="a" style="left:875px;top:592.5px" width="13" height="12" viewBox="0 0 13 12"><rect x="0.5" y="1.5" width="7.5" height="9.5" fill="#e4edf9" stroke="#3f74c0" stroke-width="1"/><path d="M1 3.5 H7 M1 5.5 H7 M1 7.5 H7 M1 9.5 H7" stroke="#3f78c8" stroke-width="1"/><path d="M5 4 H10.5 Q12.5 4 12.5 6 V8.5 H5 Z" fill="#3b4a68"/><rect x="6.3" y="1" width="4.6" height="3.2" fill="#fff" stroke="#6a7a70" stroke-width="0.7"/><rect x="6" y="7.2" width="5.2" height="3" fill="#eef2f8" stroke="#8797ad" stroke-width="0.6"/></svg>
</body></html>
